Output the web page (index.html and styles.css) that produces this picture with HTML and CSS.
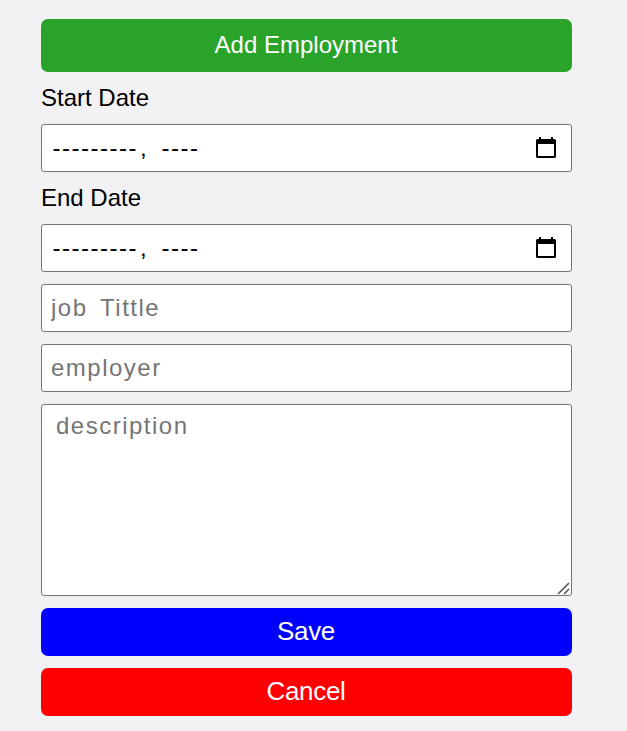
FILE: index.html
```html
<!DOCTYPE html>
<html lang="en">
<head>
<meta charset="utf-8">
<title>Employment</title>
<link rel="stylesheet" href="styles.css">
</head>
<body>
<form class="form">
  <button type="button" class="btn btn-add">Add Employment</button>
  <label class="label">Start Date</label>
  <div class="field date">
    <span class="dashes">---------</span><span class="comma">,</span><span class="dashes">----</span>
    <svg class="calendar" width="20" height="22" viewBox="0 0 20 22"><path fill="#000" fill-rule="evenodd" d="M3 0h2v2h10V0h2v2h1.5Q20 2 20 3.5v16q0 1.5-1.5 1.5h-17Q0 21 0 19.5v-16Q0 2 1.5 2H3zM2 7v12h16V7z"/></svg>
  </div>
  <label class="label">End Date</label>
  <div class="field date">
    <span class="dashes">---------</span><span class="comma">,</span><span class="dashes">----</span>
    <svg class="calendar" width="20" height="22" viewBox="0 0 20 22"><path fill="#000" fill-rule="evenodd" d="M3 0h2v2h10V0h2v2h1.5Q20 2 20 3.5v16q0 1.5-1.5 1.5h-17Q0 21 0 19.5v-16Q0 2 1.5 2H3zM2 7v12h16V7z"/></svg>
  </div>
  <input class="field title" type="text" placeholder="job  Tittle">
  <input class="field" type="text" placeholder="employer">
  <div class="area">
    <textarea class="field description" placeholder="description"></textarea>
    <svg class="grip" width="13" height="13" viewBox="0 0 13 13"><path d="M1 12 12 1M7 12l5-5" stroke="#555" stroke-width="1.6" fill="none"/></svg>
  </div>
  <button type="button" class="btn btn-save">Save</button>
  <button type="button" class="btn btn-cancel">Cancel</button>
</form>
</body>
</html>
```
FILE: styles.css
```css
* { box-sizing: border-box; }
body {
  margin: 0;
  min-height: 731px;
  background: #f2f2f5;
  font-family: "Liberation Sans", Arial, sans-serif;
}
.form {
  display: flex;
  flex-direction: column;
  gap: 12px;
  width: 531px;
  margin-left: 41px;
  padding-top: 19px;
}
.btn {
  height: 48px;
  padding: 0 1px 2px 0;
  border: 0;
  border-radius: 7px;
  color: #fff;
  font: 26px "Liberation Sans", Arial, sans-serif;
  letter-spacing: -0.3px;
}
.btn-add { height: 53px; font-size: 24px; letter-spacing: 0; background: #29a329; }
.btn-save { background: #00f; }
.btn-cancel { background: #f00; }
.label { height: 28px; line-height: 28px; font-size: 24px; }
.field {
  display: block;
  width: 100%;
  height: 48px;
  padding: 0 9px;
  border: 1px solid #767676;
  border-radius: 3px;
  outline: 0;
  background: #fff;
  color: #000;
  font: 24px "Liberation Sans", Arial, sans-serif;
  letter-spacing: 1.5px;
}
.field::placeholder { color: #757575; opacity: 1; }
.title { word-spacing: -1.7px; }
.date { display: flex; align-items: center; padding: 0 15px 0 10.5px; }
.comma { margin: 0 13.5px 0 2px; }
.calendar { margin-left: auto; }
.area { position: relative; height: 192px; }
.description { height: 192px; padding: 7px 14px; resize: none; }
.grip { position: absolute; right: 2px; bottom: 1px; }
```
